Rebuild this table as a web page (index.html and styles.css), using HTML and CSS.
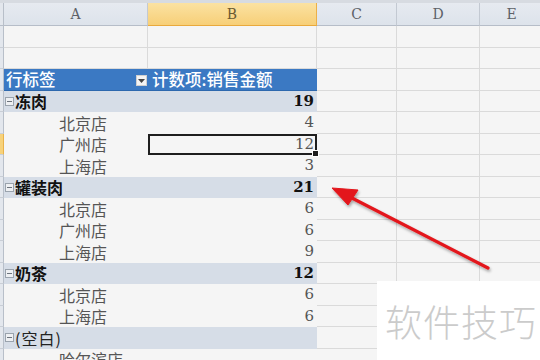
FILE: index.html
```html
<!DOCTYPE html>
<html lang="zh">
<head>
<meta charset="utf-8">
<link rel="stylesheet" href="styles.css">
</head>
<body>
<div class="sheet">
  <div class="row colhead">
    <div class="rh"></div>
    <div class="c a">A</div>
    <div class="c b sel">B</div>
    <div class="c cc">C</div>
    <div class="c d">D</div>
    <div class="c e">E</div>
  </div>
  <div class="row"><div class="rh"></div><div class="c a grid"></div><div class="c b grid"></div><div class="c cc grid"></div><div class="c d grid"></div><div class="c e grid"></div></div>
  <div class="row"><div class="rh"></div><div class="c a grid"></div><div class="c b grid"></div><div class="c cc grid"></div><div class="c d grid"></div><div class="c e grid"></div></div>
  <div class="row">
    <div class="rh"></div>
    <div class="c a pv-head"><span>行标签</span><span class="dd"><svg width="7" height="4" viewBox="0 0 7 4"><path d="M0 0H7L3.5 4Z" fill="#444"/></svg></span></div>
    <div class="c b pv-head"><span>计数项:销售金额</span></div>
    <div class="c cc grid"></div><div class="c d grid"></div><div class="c e grid"></div>
  </div>
  <div class="row">
    <div class="rh"></div>
    <div class="c a grp"><span class="mb"></span>冻肉</div>
    <div class="c b grp num">19</div>
    <div class="c cc grid"></div><div class="c d grid"></div><div class="c e grid"></div>
  </div>
  <div class="row">
    <div class="rh"></div>
    <div class="c a item">北京店</div>
    <div class="c b item num">4</div>
    <div class="c cc grid"></div><div class="c d grid"></div><div class="c e grid"></div>
  </div>
  <div class="row">
    <div class="rh rh-sel"></div>
    <div class="c a item">广州店</div>
    <div class="c b item num active">12<span class="handle"></span></div>
    <div class="c cc grid"></div><div class="c d grid"></div><div class="c e grid"></div>
  </div>
  <div class="row">
    <div class="rh"></div>
    <div class="c a item">上海店</div>
    <div class="c b item num">3</div>
    <div class="c cc grid"></div><div class="c d grid"></div><div class="c e grid"></div>
  </div>
  <div class="row">
    <div class="rh"></div>
    <div class="c a grp"><span class="mb"></span>罐装肉</div>
    <div class="c b grp num">21</div>
    <div class="c cc grid"></div><div class="c d grid"></div><div class="c e grid"></div>
  </div>
  <div class="row">
    <div class="rh"></div>
    <div class="c a item">北京店</div>
    <div class="c b item num">6</div>
    <div class="c cc grid"></div><div class="c d grid"></div><div class="c e grid"></div>
  </div>
  <div class="row">
    <div class="rh"></div>
    <div class="c a item">广州店</div>
    <div class="c b item num">6</div>
    <div class="c cc grid"></div><div class="c d grid"></div><div class="c e grid"></div>
  </div>
  <div class="row">
    <div class="rh"></div>
    <div class="c a item">上海店</div>
    <div class="c b item num">9</div>
    <div class="c cc grid"></div><div class="c d grid"></div><div class="c e grid"></div>
  </div>
  <div class="row">
    <div class="rh"></div>
    <div class="c a grp"><span class="mb"></span>奶茶</div>
    <div class="c b grp num">12</div>
    <div class="c cc grid"></div><div class="c d grid"></div><div class="c e grid"></div>
  </div>
  <div class="row">
    <div class="rh"></div>
    <div class="c a item">北京店</div>
    <div class="c b item num">6</div>
    <div class="c cc grid"></div><div class="c d grid"></div><div class="c e grid"></div>
  </div>
  <div class="row">
    <div class="rh"></div>
    <div class="c a item">上海店</div>
    <div class="c b item num">6</div>
    <div class="c cc grid"></div><div class="c d grid"></div><div class="c e grid"></div>
  </div>
  <div class="row">
    <div class="rh"></div>
    <div class="c a grp"><span class="mb"></span><span class="blank">(空白)</span></div>
    <div class="c b grp num"></div>
    <div class="c cc grid"></div><div class="c d grid"></div><div class="c e grid"></div>
  </div>
  <div class="row">
    <div class="rh"></div>
    <div class="c a item">哈尔滨店</div>
    <div class="c b item num"></div>
    <div class="c cc grid"></div><div class="c d grid"></div><div class="c e grid"></div>
  </div>
</div>

<svg class="arrow" width="540" height="360" viewBox="0 0 540 360">
  <defs>
    <filter id="sh" x="-20%" y="-20%" width="140%" height="140%">
      <feGaussianBlur in="SourceAlpha" stdDeviation="1.5"/>
      <feOffset dx="1" dy="2"/>
      <feComponentTransfer><feFuncA type="linear" slope="0.35"/></feComponentTransfer>
      <feMerge><feMergeNode/><feMergeNode in="SourceGraphic"/></feMerge>
    </filter>
  </defs>
  <g filter="url(#sh)" fill="#e3161b" stroke="#e3161b">
    <line x1="488" y1="268" x2="350" y2="197" stroke-width="3.2" stroke-linecap="round"/>
    <path d="M332 188 L358 190 L348 205 Z" stroke-width="1" stroke-linejoin="round"/>
  </g>
</svg>

<div class="wm">软件技巧</div>
</body>
</html>
```

FILE: styles.css
```css
html, body {
  margin: 0;
  padding: 0;
  width: 540px;
  height: 360px;
  overflow: hidden;
  background: #f5f5f5;
}

.sheet {
  display: flex;
  flex-direction: column;
  font-family: "Noto Sans CJK SC", sans-serif;
  line-height: 1;
}

.row {
  display: flex;
  height: 21.5px;
  flex: none;
}

.rh {
  width: 4px;
  flex: none;
  background: #e3e7ed;
  box-sizing: border-box;
  border-bottom: 1px solid #c9ced6;
  border-right: 1px solid #b8bfc9;
}
.rh-sel {
  background: #f7d27a;
  border-right-color: #e9b24a;
}

.c {
  box-sizing: border-box;
  flex: none;
  height: 100%;
  line-height: 1;
}
.a { width: 144px; }
.b { width: 169px; }
.cc { width: 80px; }
.d { width: 83px; }
.e { width: 64px; }

.grid {
  border-right: 1px solid #dadada;
  border-bottom: 1px solid #dadada;
}

.colhead {
  height: 26px;
  border-top: 3px solid #d7dbe1;
  box-sizing: border-box;
}
.colhead .rh { border-bottom: 1px solid #b8bfc9; }
.colhead .c {
  background: linear-gradient(#e6eaf0, #dde3eb);
  border-right: 1px solid #c3c9d2;
  border-bottom: 1px solid #b6bdc8;
  display: flex;
  align-items: center;
  justify-content: center;
  font-family: "DejaVu Serif", serif;
  font-size: 14px;
  color: #5d6168;
}
.colhead .c.sel {
  background: linear-gradient(#fbe2a2, #f7cf78);
  border-right: 1px solid #ecb048;
  border-bottom: 1px solid #e9a93c;
  color: #6b5a32;
}

.pv-head {
  background: #3b79c3;
  color: #fff;
  font-size: 16.5px;
  font-weight: 500;
  display: flex;
  align-items: center;
  justify-content: space-between;
  border-bottom: 1px solid #2d68ae;
}
.a.pv-head { padding: 0 1px 0 2px; }
.b.pv-head { padding-left: 4px; justify-content: flex-start; }

.dd {
  width: 11px;
  height: 11px;
  background: #f4f4f4;
  border: 1px solid #d0d0d0;
  box-sizing: border-box;
  display: flex;
  align-items: flex-end;
  justify-content: center;
  padding-bottom: 2px;
  margin-top: 3px;
}

.grp {
  background: #d6dde7;
  font-weight: 700;
  font-size: 16px;
  color: #111;
  display: flex;
  align-items: center;
}
.a.grp { padding-left: 1px; }
.mb {
  width: 7px;
  height: 7px;
  border: 1px solid #9aa3ad;
  background: #eef0f3;
  margin-right: 1px;
  position: relative;
  flex: none;
}
.mb::after {
  content: "";
  position: absolute;
  left: 1px;
  right: 1px;
  top: 3px;
  height: 1px;
  background: #6c737c;
}
.blank { font-weight: 400; color: #222; letter-spacing: 1px; }

.item {
  font-size: 16px;
  color: #555;
  display: flex;
  align-items: center;
}
.a.item { padding-left: 55px; }

.num {
  justify-content: flex-end;
  padding-right: 3px;
  font-family: "DejaVu Serif", serif;
  font-size: 15px;
}
.grp.num { font-weight: 700; color: #111; }
.item.num { color: #555; }

.active {
  position: relative;
  border: 2px solid #1e1e1e;
  padding-right: 1px;
}
.handle {
  position: absolute;
  right: -4px;
  bottom: -4px;
  width: 5px;
  height: 5px;
  background: #1e1e1e;
  border: 1px solid #fff;
}

.arrow {
  position: absolute;
  left: 0;
  top: 0;
  pointer-events: none;
}

.wm {
  position: absolute;
  left: 377px;
  top: 281px;
  width: 163px;
  height: 79px;
  background: #ffffff;
  color: #cbcbcb;
  font-family: "Noto Sans CJK SC", sans-serif;
  font-size: 37px;
  font-weight: 300;
  letter-spacing: 1px;
  display: flex;
  align-items: center;
  padding-left: 8px;
  box-sizing: border-box;
}
```
